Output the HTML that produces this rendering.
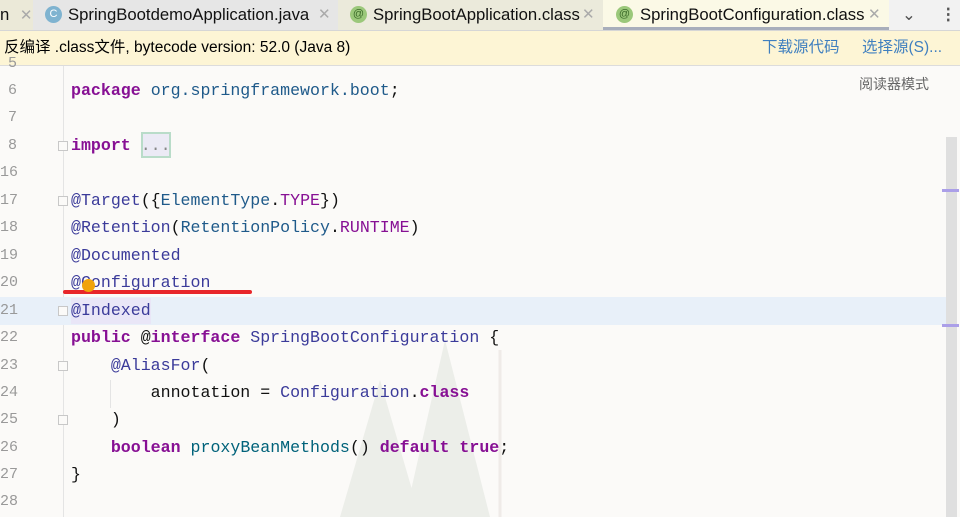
<!DOCTYPE html>
<html><head><meta charset="utf-8"><style>
*{margin:0;padding:0;box-sizing:border-box}
body{width:960px;height:517px;overflow:hidden;background:#fbfaf8;font-family:"Liberation Sans","Noto Sans CJK SC",sans-serif;position:relative}
.tabs{position:absolute;left:0;top:0;width:960px;height:31px;background:#f2f2f2;border-bottom:1px solid #d6d6d6}
.tab{position:absolute;top:0;height:30px;font-size:16.7px;color:#111;line-height:30px;white-space:nowrap}
.x{color:#aaa;font-size:15px}
.ic{position:absolute;top:6px;width:17px;height:17px;border-radius:50%;background:#9bc87a;color:#3d6b2a;font-size:11px;line-height:17px;text-align:center}
.banner{position:absolute;top:31px;left:0;width:960px;height:35px;background:#fdf5d5;border-bottom:1px solid #dcdcdc;font-size:15.5px;line-height:34px}
.code{font-family:"Liberation Mono","DejaVu Sans Mono",monospace;font-size:16.6px;position:absolute;left:71px;white-space:pre;color:#111}
.ln{font-family:"Liberation Mono",monospace;font-size:15px;position:absolute;left:0;color:#999;width:17px;text-align:right}
.k{color:#871094;font-weight:bold}.a{color:#3b3b9a}.c{color:#1f5a8a}.f{color:#871094}.m{color:#00627a}
.fold{position:absolute;left:58px;width:10px;height:10px;border:1px solid #c8c8c8;background:#fbfaf8}
</style></head><body>
<div class="tabs">
 <div class="tab" style="left:0;width:33px;background:#ebe9d8;padding-left:0">n <span class="x" style="margin-left:6px">✕</span></div>
 <div class="tab" style="left:33px;width:305px;background:#e6e6e6"><div class="ic" style="left:12px;background:#7fb3d0;color:#fff">C</div><span style="position:absolute;left:35px">SpringBootdemoApplication.java</span><span class="x" style="position:absolute;left:285px">✕</span></div>
 <div class="tab" style="left:338px;width:265px;background:#ebeadb"><div class="ic" style="left:12px">@</div><span style="position:absolute;left:35px">SpringBootApplication.class</span><span class="x" style="position:absolute;left:244px">✕</span></div>
 <div class="tab" style="left:603px;width:286px;background:#fbf9e6;border-bottom:3px solid #a8aebb"><div class="ic" style="left:13px">@</div><span style="position:absolute;left:37px">SpringBootConfiguration.class</span><span class="x" style="position:absolute;left:265px">✕</span></div>
 <div class="tab" style="left:902px;color:#555">⌄</div>
 <div class="tab" style="left:940px;color:#555;font-weight:bold">⋮</div>
</div>
<div class="banner"><span style="position:absolute;left:4px">反编译 .class文件, bytecode version: 52.0 (Java 8)</span><span style="position:absolute;left:762px;color:#3f7fbf">下载源代码</span><span style="position:absolute;left:862px;color:#3f7fbf">选择源(S)...</span></div>
<div style="position:absolute;left:859px;top:74px;font-size:14px;color:#666">阅读器模式</div>
<div style="position:absolute;left:63px;top:66px;width:1px;height:451px;background:#e4e4e4"></div>
<div style="position:absolute;left:0;top:297px;width:946px;height:28px;background:#e8f0f9"></div>
<div style="position:absolute;left:946px;top:137px;width:11px;height:380px;background:#dfdfdf"></div>
<div style="position:absolute;left:942px;top:189px;width:17px;height:3px;background:#ab9fe8"></div>
<div style="position:absolute;left:942px;top:324px;width:17px;height:3px;background:#ab9fe8"></div>
<svg style="position:absolute;left:330px;top:340px" width="200" height="177"><polygon points="50,40 10,177 90,177" fill="#eceee9"/><polygon points="115,0 75,177 160,177" fill="#eceee9"/><line x1="170" y1="10" x2="170" y2="177" stroke="#efebe8" stroke-width="3"/></svg>
<div style="position:absolute;left:141px;top:132px;width:30px;height:26px;background:#ebeaf5;border:2px solid #b9dcc9"></div>
<div style="position:absolute;left:71px;top:298px;width:80px;height:26px;background:#e9e6f7"></div>
<div class="fold" style="top:141px"></div>
<div class="fold" style="top:196px"></div>
<div class="fold" style="top:306px"></div>
<div class="fold" style="top:361px"></div>
<div class="fold" style="top:415px"></div>
<div style="position:absolute;left:110px;top:380px;width:1px;height:28px;background:#e4e4e4"></div>
<div class="ln" style="top:55px">5</div>
<div class="ln" style="top:82px">6</div><div class="ln" style="top:109px">7</div><div class="ln" style="top:137px">8</div><div class="ln" style="top:164px">16</div><div class="ln" style="top:192px">17</div><div class="ln" style="top:219px">18</div><div class="ln" style="top:247px">19</div><div class="ln" style="top:274px">20</div><div class="ln" style="top:302px">21</div><div class="ln" style="top:329px">22</div><div class="ln" style="top:357px">23</div><div class="ln" style="top:384px">24</div><div class="ln" style="top:411px">25</div><div class="ln" style="top:439px">26</div><div class="ln" style="top:466px">27</div><div class="ln" style="top:493px">28</div>
<div class="code" style="top:81px"><span class="k">package</span> <span class="c">org.springframework.boot</span>;</div>
<div class="code" style="top:136px"><span class="k">import</span> <span style="color:#888">...</span></div>
<div class="code" style="top:191px"><span class="a">@Target</span>({<span class="c">ElementType</span>.<span class="f">TYPE</span>})</div>
<div class="code" style="top:218px"><span class="a">@Retention</span>(<span class="c">RetentionPolicy</span>.<span class="f">RUNTIME</span>)</div>
<div class="code" style="top:246px"><span class="a">@Documented</span></div>
<div class="code" style="top:273px"><span class="a">@Configuration</span></div>
<div class="code" style="top:301px"><span class="a">@Indexed</span></div>
<div class="code" style="top:328px"><span class="k">public</span> @<span class="k">interface</span> <span class="a">SpringBootConfiguration</span> {</div>
<div class="code" style="top:356px">    <span class="a">@AliasFor</span>(</div>
<div class="code" style="top:383px">        annotation = <span class="a">Configuration</span>.<span class="k">class</span></div>
<div class="code" style="top:410px">    )</div>
<div class="code" style="top:438px">    <span class="k">boolean</span> <span class="m">proxyBeanMethods</span>() <span class="k">default</span> <span class="k">true</span>;</div>
<div class="code" style="top:465px">}</div>
<div style="position:absolute;left:63px;top:290px;width:189px;height:4px;border-radius:2px;background:#e8262a"></div>
<div style="position:absolute;left:82px;top:279px;width:13px;height:13px;border-radius:50%;background:#f0a30a"></div>
</body></html>
